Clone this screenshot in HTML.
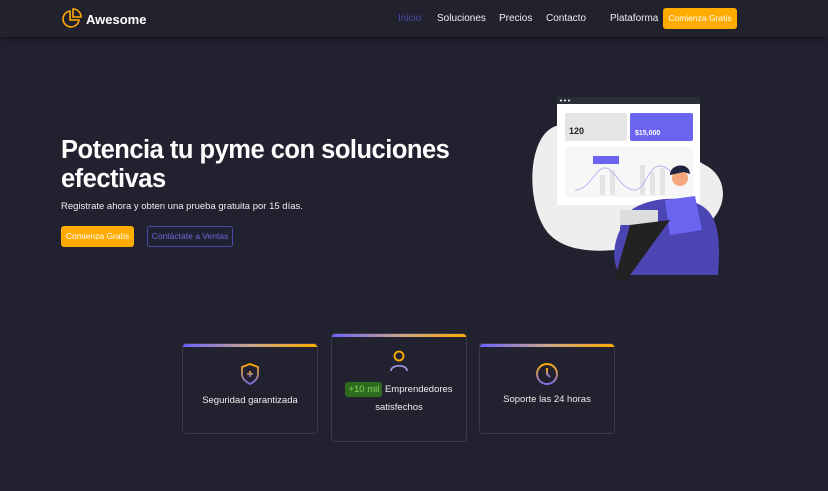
<!DOCTYPE html>
<html><head><meta charset="utf-8"><style>
*{margin:0;padding:0;box-sizing:border-box}
body{width:828px;height:491px;background:#222130;font-family:"Liberation Sans",sans-serif;color:#fff;position:relative;overflow:hidden}
.nav{position:absolute;top:0;left:0;width:828px;height:37px;background:#22212e;box-shadow:0 2px 4px rgba(0,0,0,.35)}
.logo{position:absolute;left:62px;top:8px}
.brand{position:absolute;left:86px;top:12px;font-weight:bold;font-size:13px}
.nl{position:absolute;top:13px;font-size:10px;color:#eee;white-space:nowrap}
.btn{position:absolute;background:#ffab00;color:#fff;font-size:8.5px;border-radius:3px;text-align:center;white-space:nowrap}
h1{position:absolute;left:61px;top:136px;font-size:25.5px;line-height:29px;font-weight:bold;width:460px;letter-spacing:-0.5px}
.sub{position:absolute;left:61px;top:201px;font-size:9.5px;color:#eee}
.out{position:absolute;left:147px;top:226px;width:86px;height:21px;border:1px solid #4b48a8;border-radius:3px;color:#6a66dd;font-size:8.5px;text-align:center;line-height:19px}
.card{position:absolute;width:136px;background:#222130;border:1px solid #3a3948;border-radius:4px;overflow:hidden;text-align:center;font-size:9.5px;color:#eee}
.card:before{content:"";position:absolute;left:0;top:0;right:0;height:3px;background:linear-gradient(90deg,#6c63ff,#c9a58b,#ffab00)}
</style></head><body>
<div class="nav">
<svg class="logo" width="20" height="20" viewBox="0 0 20 20" fill="none" stroke="#ffab00" stroke-width="1.6"><path d="M8 3 A8 8 0 1 0 17 12 L8 12 Z"/><path d="M11 1 A8 8 0 0 1 19 9 L11 9 Z"/></svg>
<div class="brand">Awesome</div>
<div class="nl" style="left:398px;color:#4e4aa8">Inicio</div>
<div class="nl" style="left:437px">Soluciones</div>
<div class="nl" style="left:499px">Precios</div>
<div class="nl" style="left:546px">Contacto</div>
<div class="nl" style="left:610px">Plataforma</div>
<div class="btn" style="left:663px;top:8px;width:74px;height:21px;line-height:21px">Comienza Gratis</div>
</div>
<h1>Potencia tu pyme con soluciones efectivas</h1>
<div class="sub">Registrate ahora y obten una prueba gratuita por 15 días.</div>
<div class="btn" style="left:61px;top:226px;width:73px;height:21px;line-height:21px">Comienza Gratis</div>
<div class="out">Contáctate a Ventas</div>
<svg style="position:absolute;left:520px;top:90px" width="220" height="200" viewBox="0 0 220 200">
<path d="M40 35 C5 40 5 120 30 145 C55 170 110 160 150 150 C210 140 215 90 185 75 C160 60 120 25 40 35Z" fill="#eeeeee"/>
<rect x="37" y="7" width="143" height="108" fill="#fff"/>
<rect x="37" y="7" width="143" height="7" fill="#2b2f36"/>
<circle cx="41" cy="10.5" r="1" fill="#fff"/><circle cx="45" cy="10.5" r="1" fill="#fff"/><circle cx="49" cy="10.5" r="1" fill="#fff"/>
<rect x="45" y="23" width="62" height="28" rx="2" fill="#e5e5e5"/>
<text x="49" y="44" font-size="9" font-weight="bold" fill="#222" font-family="Liberation Sans">120</text>
<rect x="110" y="23" width="63" height="28" rx="2" fill="#6a64f0"/>
<text x="115" y="45" font-size="7" font-weight="bold" fill="#fff" font-family="Liberation Sans">$15,000</text>
<rect x="45" y="57" width="128" height="50" rx="2" fill="#f7f7f7"/>
<g fill="#e4e4e4"><rect x="80" y="85" width="5" height="20"/><rect x="90" y="80" width="5" height="25"/><rect x="120" y="75" width="5" height="30"/><rect x="130" y="82" width="5" height="23"/><rect x="140" y="78" width="5" height="27"/></g>
<rect x="73" y="66" width="26" height="8" fill="#6a64f0"/>
<path d="M55 100 C70 100 75 78 85 78 C95 78 100 100 115 100 C125 100 128 76 140 76 C150 76 152 88 165 88" stroke="#b8b6f0" fill="none"/>
<path d="M100 140 C100 115 140 105 165 110 C195 115 202 135 198 185 L100 185 C90 170 95 150 100 140Z" fill="#4c46b5"/>
<path d="M145 110 L175 106 L182 140 L150 145Z" fill="#6a64f0"/>
<circle cx="160" cy="88" r="8" fill="#f4a77a"/>
<path d="M150 85 C150 73 170 72 170 84 L164 82Z" fill="#1f2340"/>
<rect x="100" y="120" width="38" height="15" fill="#ddd"/>
<path d="M110 135 L150 130 L105 192 L95 188 Z" fill="#222"/>
</svg>
<div class="card" style="left:182px;top:343px;height:91px">
<svg style="margin-top:18px" width="22" height="24" viewBox="0 0 22 24" fill="none" stroke-width="1.8"><defs><linearGradient id="g" x1="0" y1="0" x2="0" y2="1"><stop offset="0" stop-color="#ffab00"/><stop offset="1" stop-color="#7a6fe8"/></linearGradient></defs><path d="M11 2 L19 5 V12 C19 17 15 20 11 22 C7 20 3 17 3 12 V5Z" stroke="url(#g)"/><path d="M11 9 V15 M8 12 H14" stroke="url(#g)"/></svg>
<div style="margin-top:6px">Seguridad garantizada</div></div>
<div class="card" style="left:331px;top:333px;height:109px">
<svg style="margin-top:15px" width="22" height="24" viewBox="0 0 22 24" fill="none" stroke-width="1.8"><circle cx="11" cy="7" r="4.5" stroke="#ffab00"/><path d="M3 22 C3 15 19 15 19 22" stroke="#9b8fd8"/></svg>
<div style="margin-top:5px;line-height:18px"><span style="background:#2f6b1e;color:#7fd35a;border-radius:3px;padding:2px 3px">+10 mil</span> Emprendedores<br>satisfechos</div></div>
<div class="card" style="left:479px;top:343px;height:91px">
<svg style="margin-top:18px" width="24" height="24" viewBox="0 0 24 24" fill="none" stroke-width="2"><defs><linearGradient id="h" x1="0" y1="0" x2="0" y2="1"><stop offset="0" stop-color="#ffab00"/><stop offset="1" stop-color="#7a6fe8"/></linearGradient></defs><circle cx="12" cy="12" r="10" stroke="url(#h)"/><path d="M12 6 V12 L15 15" stroke="url(#h)"/></svg>
<div style="margin-top:5px">Soporte las 24 horas</div></div>
</body></html>
